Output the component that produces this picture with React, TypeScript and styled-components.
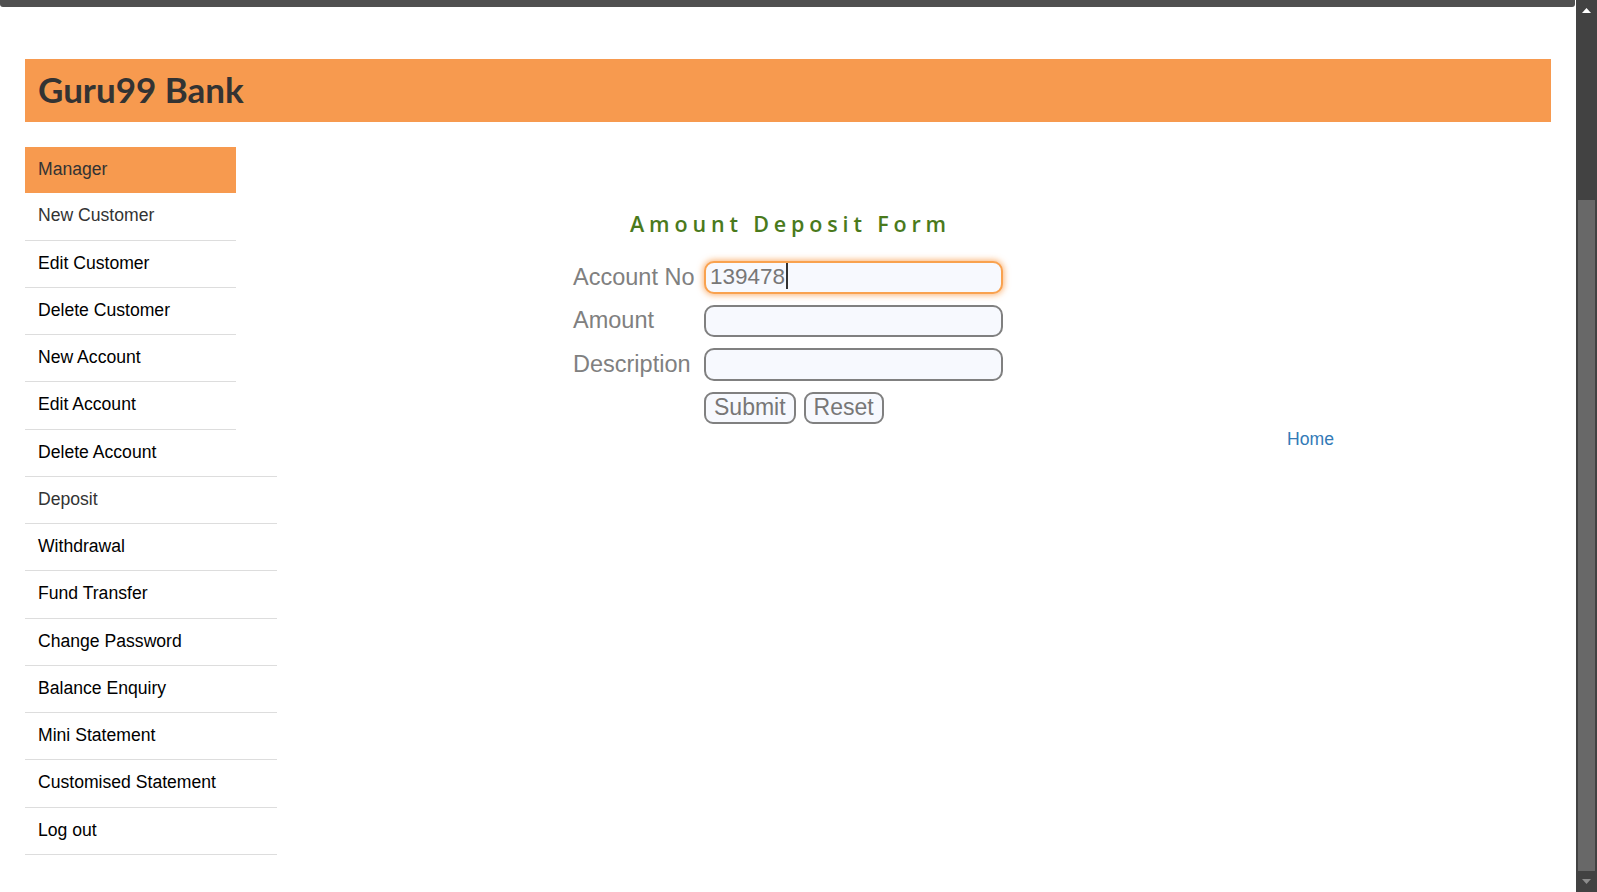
import React from "react";
import styled, { createGlobalStyle } from "styled-components";

const GlobalStyle = createGlobalStyle`
  html, body {
    margin: 0;
    padding: 0;
    background: #ffffff;
    font-family: "Liberation Sans", Arial, sans-serif;
    overflow: hidden;
  }
  * { box-sizing: border-box; }
`;

const topMenu = [
  { label: "New Customer", muted: true },
  { label: "Edit Customer" },
  { label: "Delete Customer" },
  { label: "New Account" },
  { label: "Edit Account" },
];

const bottomMenu = [
  { label: "Deposit", muted: true },
  { label: "Withdrawal" },
  { label: "Fund Transfer" },
  { label: "Change Password" },
  { label: "Balance Enquiry" },
  { label: "Mini Statement" },
  { label: "Customised Statement" },
  { label: "Log out" },
];

const App = () => {
  return (
    <Frame>
      <GlobalStyle />
      <Viewport>
        <TopStrip />
        <Page>
          <Header>
            <h2>Guru99 Bank</h2>
          </Header>
          <Body>
            <Sidebar>
              <MenuList $width={211}>
                <MenuItem $active>Manager</MenuItem>
                {topMenu.map((m) => (
                  <MenuItem key={m.label} $muted={m.muted}>{m.label}</MenuItem>
                ))}
                <MenuItem $last>Delete Account</MenuItem>
              </MenuList>
              <MenuList $width={252} $topLine>
                {bottomMenu.map((m) => (
                  <MenuItem key={m.label} $muted={m.muted}>{m.label}</MenuItem>
                ))}
              </MenuList>
            </Sidebar>
            <Main>
              <FormTable>
                <FormTitle>Amount Deposit Form</FormTitle>
                <FieldRow>
                  <Label>Account No</Label>
                  <InputWrap>
                    <Field $focused defaultValue="139478" />
                    <Caret />
                  </InputWrap>
                </FieldRow>
                <FieldRow>
                  <Label>Amount</Label>
                  <Field />
                </FieldRow>
                <FieldRow>
                  <Label>Description</Label>
                  <Field />
                </FieldRow>
                <FieldRow>
                  <Label />
                  <ButtonRow>
                    <Button type="button">Submit</Button>
                    <Button type="button">Reset</Button>
                  </ButtonRow>
                </FieldRow>
              </FormTable>
              <HomeRow>
                <HomeLink href="#">Home</HomeLink>
              </HomeRow>
            </Main>
          </Body>
        </Page>
      </Viewport>
      <Scrollbar>
        <ArrowBox>
          <svg width="9" height="5" viewBox="0 0 9 5">
            <polygon points="0,5 4.5,0 9,5" fill="#ffffff" />
          </svg>
        </ArrowBox>
        <Track>
          <Thumb />
        </Track>
        <ArrowBox>
          <svg width="9" height="5" viewBox="0 0 9 5">
            <polygon points="0,0 9,0 4.5,5" fill="#8c8c8c" />
          </svg>
        </ArrowBox>
      </Scrollbar>
    </Frame>
  );
};

export default App;

const Frame = styled.div`
  display: flex;
  width: 100vw;
  height: 100vh;
  overflow: hidden;
`;

const Viewport = styled.div`
  flex: 1;
  display: flex;
  flex-direction: column;
  min-width: 0;
`;

const TopStrip = styled.div`
  height: 7px;
  width: 1575px;
  background: #505050;
  border-radius: 0 0 3px 3px;
  flex-shrink: 0;
`;

const Page = styled.div`
  padding: 52px 25px 0 25px;
`;

const Header = styled.div`
  height: 63px;
  background: #f79a4f;
  display: flex;
  align-items: center;
  padding-left: 13px;

  h2 {
    margin: 0;
    font-family: "Lato", "Open Sans", sans-serif;
    font-weight: 700;
    font-size: 35px;
    color: #333333;
    line-height: 1;
    padding-bottom: 3px;
  }
`;

const Body = styled.div`
  display: flex;
  margin-top: 25px;
`;

const Sidebar = styled.div`
  display: flex;
  flex-direction: column;
  width: 252px;
  flex-shrink: 0;
`;

const MenuList = styled.div<{ $width: number; $topLine?: boolean }>`
  width: ${(p) => p.$width}px;
  display: flex;
  flex-direction: column;
  border-top: ${(p) => (p.$topLine ? "1px solid #dddddd" : "none")};
`;

const MenuItem = styled.div<{ $active?: boolean; $muted?: boolean; $last?: boolean }>`
  height: ${(p) => (p.$active || p.$last ? "46.25px" : "47.25px")};
  display: flex;
  align-items: center;
  padding-left: 13px;
  padding-bottom: 1px;
  font-size: 17.6px;
  color: ${(p) => (p.$active || p.$muted ? "#333333" : "#000000")};
  background: ${(p) => (p.$active ? "#f79a4f" : "transparent")};
  border-bottom: ${(p) => (p.$active || p.$last ? "none" : "1px solid #dddddd")};
`;

const Main = styled.div`
  flex: 1;
  display: flex;
  flex-direction: column;
  padding-left: 296px;
`;

const FormTable = styled.div`
  width: 430px;
  display: flex;
  flex-direction: column;
  gap: 11px;
`;

const FormTitle = styled.div`
  margin-top: 62px;
  margin-bottom: 11px;
  text-align: center;
  font-family: "Open Sans", sans-serif;
  font-weight: 600;
  font-size: 21.5px;
  line-height: 30px;
  letter-spacing: 4.85px;
  color: #4a7a1c;
  padding-left: 5px;
`;

const FieldRow = styled.div`
  display: grid;
  grid-template-columns: 131px 299px;
  align-items: center;
`;

const Label = styled.div`
  font-size: 23.5px;
  color: #808080;
`;

const InputWrap = styled.div`
  position: relative;
`;

const Field = styled.input<{ $focused?: boolean }>`
  width: 299px;
  height: 32.5px;
  border-radius: 10px;
  border: 2px solid ${(p) => (p.$focused ? "#f9a24f" : "#808080")};
  box-shadow: ${(p) => (p.$focused ? "0 0 6px 1px rgba(249, 154, 70, 0.75)" : "none")};
  background: #f7f9fe;
  padding: 0 4px;
  font-family: "Liberation Sans", Arial, sans-serif;
  font-size: 22.5px;
  color: #777777;
  outline: none;
  display: block;
`;

const Caret = styled.span`
  position: absolute;
  left: 82px;
  top: 2px;
  width: 1.5px;
  height: 26px;
  background: #333333;
`;

const ButtonRow = styled.div`
  display: flex;
  gap: 8px;
`;

const Button = styled.button`
  height: 32px;
  padding: 0 8px;
  border: 2px solid #808080;
  border-radius: 9px;
  background: #f7f9fe;
  font-family: "Liberation Sans", Arial, sans-serif;
  font-size: 23px;
  color: #777777;
  line-height: 1;
`;

const HomeRow = styled.div`
  margin-top: 5px;
  padding-left: 714px;
`;

const HomeLink = styled.a`
  font-size: 17.6px;
  color: #337ab7;
  text-decoration: none;
`;

const Scrollbar = styled.div`
  width: 21px;
  flex-shrink: 0;
  background: #424242;
  display: flex;
  flex-direction: column;
`;

const ArrowBox = styled.div`
  height: 21px;
  display: flex;
  align-items: center;
  justify-content: center;
  flex-shrink: 0;
`;

const Track = styled.div`
  flex: 1;
  display: flex;
  flex-direction: column;
  justify-content: flex-end;
  padding: 0 2px 0 2px;
`;

const Thumb = styled.div`
  height: 671px;
  background: #686868;
`;
